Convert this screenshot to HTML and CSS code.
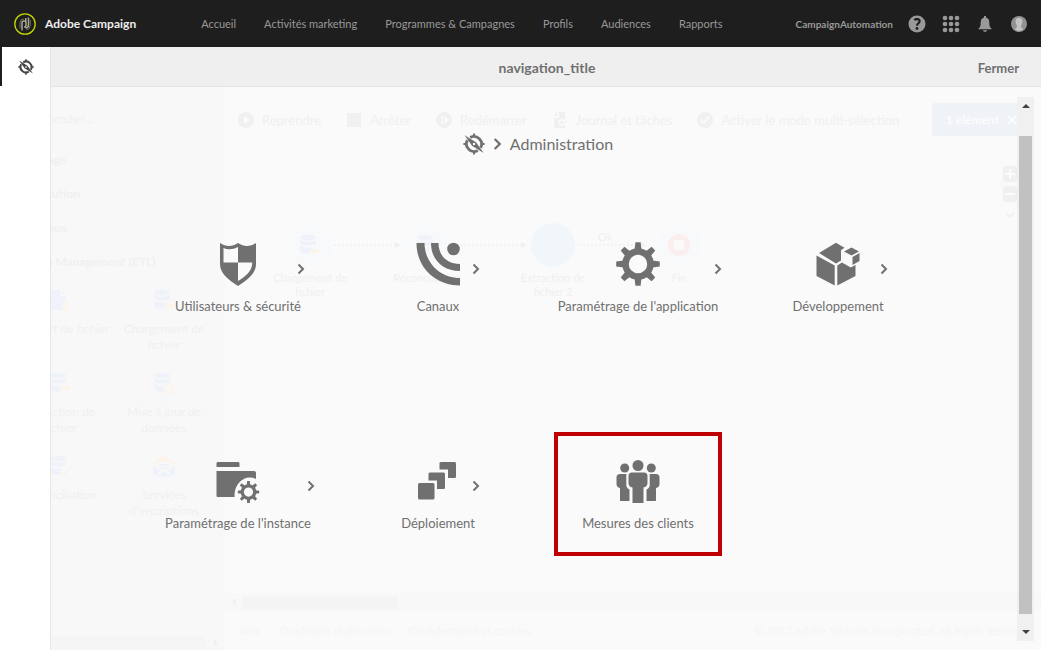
FILE: index.html
```html
<!DOCTYPE html>
<html lang="fr">
<head>
<meta charset="utf-8">
<meta name="viewport" content="width=device-width, initial-scale=1">
<title>Adobe Campaign</title>
<link rel="stylesheet" href="styles.css">
</head>
<body>
<svg class="defs" aria-hidden="true">
  <symbol id="compass" viewBox="0 0 22 22">
    <path fill="none" stroke="currentColor" stroke-width="2.8" d="M7.200 4.500A7.600 7.600 0 0 1 17.600 14.800M14.800 17.500A7.600 7.600 0 0 1 4.400 7.200"/>
    <path fill="currentColor" d="M10 .4h2v3h-2zM10 18.600h2v3h-2zM.4 10h3v2h-3zM18.600 10h3v2h-3z"/>
    <path fill="currentColor" fill-rule="evenodd" d="M1.600 2.200 13 9.200 20.600 20 9 12.800zM11 9.800a1.200 1.200 0 1 0 .01 2.400 1.200 1.200 0 0 0-.01-2.400z"/>
  </symbol>
  <symbol id="chevron" viewBox="0 0 8 12"><path fill="none" stroke="currentColor" stroke-width="2" d="M1.500 1.500 6 6l-4.500 4.500"/></symbol>
  <symbol id="db" viewBox="0 0 22 22"><ellipse cx="9" cy="3.500" rx="8" ry="3"/><path d="M1 5.500c3 3 13 3 16 0v4c-3 3-13 3-16 0zM1 11.500c3 3 13 3 16 0v1c-4 0-6 3-6 7-4 1-8 0-10-2z"/></symbol>
  <symbol id="gear" viewBox="0 0 44 44">
    <g fill="currentColor">
      <path id="tooth" d="M18.500 8 19.400 .2h5.200L25.500 8z"/>
      <use href="#tooth" transform="rotate(45 22 22)"/><use href="#tooth" transform="rotate(90 22 22)"/><use href="#tooth" transform="rotate(135 22 22)"/><use href="#tooth" transform="rotate(180 22 22)"/><use href="#tooth" transform="rotate(225 22 22)"/><use href="#tooth" transform="rotate(270 22 22)"/><use href="#tooth" transform="rotate(315 22 22)"/>
    </g>
    <circle cx="22" cy="22" r="12.500" fill="none" stroke="currentColor" stroke-width="6.500"/>
  </symbol>
</svg>

<header class="topbar">
  <a class="brand" href="#">
    <svg class="logo" viewBox="0 0 22 22" aria-hidden="true"><circle cx="11" cy="11" r="10.200" fill="none" stroke="#c5d800" stroke-width="1.300"/><path fill="none" stroke="#a9a994" stroke-width="1.500" d="M8 17.500V10a2 2 0 0 1 4 0v2.500a2 2 0 0 1-2 1.500M14.500 4.500V12a3 3 0 0 1-3 3M11.800 5v4"/><path fill="none" stroke="#6c6c5c" stroke-width="1" d="M6 15.500V10a4 4 0 0 1 4-4M16.300 7v5.500a5 5 0 0 1-4 4.500"/></svg>
    <span>Adobe Campaign</span>
  </a>
  <nav class="menu" aria-label="Principal">
    <a href="#">Accueil</a><a href="#">Activités marketing</a><a href="#">Programmes &amp; Campagnes</a><a href="#">Profils</a><a href="#">Audiences</a><a href="#">Rapports</a>
  </nav>
  <a class="account" href="#">CampaignAutomation</a>
  <div class="tools">
    <button aria-label="Aide"><svg viewBox="0 0 18 18"><circle cx="9" cy="9" r="8.500" fill="#999"/><path fill="none" stroke="#1e1e1e" stroke-width="2.200" d="M6.300 5C8 3.500 11.600 3.800 11.600 6.300c0 2-2.600 2-2.600 4.500"/><circle cx="9" cy="13.500" r="1.400" fill="#1e1e1e"/></svg></button>
    <button aria-label="Applications"><svg viewBox="0 0 18 18" fill="#999"><circle cx="3" cy="3" r="2.300"/><circle cx="9" cy="3" r="2.300"/><circle cx="15" cy="3" r="2.300"/><circle cx="3" cy="9" r="2.300"/><circle cx="9" cy="9" r="2.300"/><circle cx="15" cy="9" r="2.300"/><circle cx="3" cy="15" r="2.300"/><circle cx="9" cy="15" r="2.300"/><circle cx="15" cy="15" r="2.300"/></svg></button>
    <button aria-label="Notifications"><svg viewBox="0 0 18 18" fill="#999"><path d="M8 2.500V1h2v1.500c2.400.6 3.300 2.500 3.300 5 0 3.500.7 5 2.200 6v.8h-13v-.8c1.500-1 2.200-2.500 2.200-6 0-2.500.9-4.400 3.300-5zM7 15.300h4c-.3 2-3.700 2-4 0z"/></svg></button>
    <button aria-label="Profil"><svg viewBox="0 0 18 18"><circle cx="9" cy="9" r="8" fill="#939393"/><path fill="#c4c4c4" d="M9 3c-4.500 0-3.800 5.500-2 7.800.3 2.200-1.200 2.500-2.200 3.500 2.400 2.300 6 2.300 8.400 0-1-1-2.500-1.300-2.200-3.500C12.800 8.500 13.500 3 9 3z"/></svg></button>
  </div>
</header>

<div class="stage">
  <div class="workspace">
    <aside class="palette">
      <p class="search">Rechercher...</p>
      <h3>Ciblage</h3><h3>Exécution</h3><h3>Canaux</h3><h3>Data Management (ETL)</h3>
      <ul class="activities">
        <li class="single"><svg viewBox="0 0 22 22"><path d="M1 1h10v6h6v5c-3 0-5 4-3 9H1zM12.500 1l4.500 4.500h-4.500z"/><path class="warm" d="m17 12 3.500 5h-2v5h-3v-5h-2z"/></svg>Transfert de fichier</li>
        <li><svg viewBox="0 0 22 22"><use href="#db"/><path class="warm" d="m11 17 5-4v2.500h5v3h-5V21z"/></svg>Chargement de fichier</li>
        <li><svg viewBox="0 0 22 22"><use href="#db"/><path class="warm" d="M11 20c0-4 3-5 6-5v-2l5 3.500-5 3.500v-2c-3 0-5 0-6 2z"/></svg>Extraction de fichier</li>
        <li><svg viewBox="0 0 22 22"><use href="#db"/><circle class="ring" cx="15.500" cy="16.500" r="4.500"/></svg>Mise à jour de données</li>
        <li><svg viewBox="0 0 22 22"><use href="#db"/><path class="check" d="m12 17 3 3 6-7"/></svg>Réconciliation</li>
        <li><svg viewBox="0 0 22 22"><path class="warm" d="M0 9 11 0l11 9-4 2V7H4v4z"/><path d="M0 11l8 5-8 6zM22 11l-8 5 8 6zM2 22l9-6 9 6zM6 9h10v2H6zM6 12h10v2H6z"/></svg>Services d'inscriptions</li>
      </ul>
      <div class="palette-scroll"><i></i><svg viewBox="0 0 8 8"><path d="M2 0v8l4-4z"/></svg></div>
    </aside>
    <main class="workflow">
      <div class="toolbar">
        <span><svg viewBox="0 0 16 16"><path fill-rule="evenodd" d="M8 0a8 8 0 1 0 .01 0zM6 4l6 4-6 4z"/></svg>Reprendre</span>
        <span><svg viewBox="0 0 16 16"><path d="M1 1h14v14H1z"/></svg>Arrêter</span>
        <span><svg viewBox="0 0 16 16"><path fill-rule="evenodd" d="M8 0a8 8 0 1 0 .01 0zM5 4h1.500v8H5zM8 4l5 4-5 4z"/></svg>Redémarrer</span>
        <span><svg viewBox="0 0 16 16"><path fill-rule="evenodd" d="M7 0h6v16H2V6h5zM10 7a3.500 3.500 0 1 0 .01 7 3.500 3.500 0 0 0-.01-7zM5 0v4H2z"/><circle cx="10" cy="10.500" r="1.800"/></svg>Journal et tâches</span>
        <span><svg viewBox="0 0 16 16"><circle cx="8" cy="8" r="8"/><path fill="none" stroke="#fafafa" stroke-width="2" d="m4 8 3 3 5-6"/></svg>Activer le mode multi-sélection</span>
        <b class="selected">1 élément<svg viewBox="0 0 10 10"><path stroke="currentColor" stroke-width="2" d="m1 1 8 8M9 1 1 9"/></svg></b>
      </div>
      <div class="canvas">
        <svg class="links" viewBox="0 0 480 100" fill="none" stroke="#f0f0f0" stroke-width="1.500" stroke-dasharray="2 2"><path d="M109 50h62M235 50h62M354 50h62"/><path fill="#f0f0f0" stroke="none" d="m170 47 6 3-6 3zM296 47l6 3-6 3zM415 47l6 3-6 3z"/></svg>
        <div class="node n1"><span><svg viewBox="0 0 22 22"><use href="#db"/><path class="warm" d="m11 17 5-4v2.500h5v3h-5V21z"/></svg></span>Chargement de fichier</div>
        <div class="node n2"><span><svg viewBox="0 0 22 22"><use href="#db"/></svg></span>Réconciliation</div>
        <div class="node n3"><span></span>Extraction de fichier 2</div>
        <div class="node n4"><span><svg viewBox="0 0 22 22"><circle cx="11" cy="11" r="11" fill="#fbeeee"/><path fill="#fafafa" d="M6 6h10v10H6z"/></svg></span>Fin</div>
        <div class="link-label">Ok</div>
        <div class="zoom"><svg viewBox="0 0 14 56"><rect width="14" height="16" rx="2" fill="#f0f0f0"/><rect y="20" width="14" height="16" rx="2" fill="#f0f0f0"/><path stroke="#fcfcfc" stroke-width="2" d="M2 8h10M7 3v10M2 28h10"/><path fill="none" stroke="#eee" stroke-width="1.500" d="m3 47 4 4 4-4"/></svg></div>
      </div>
      <div class="canvas-scroll"><svg viewBox="0 0 8 8"><path d="M6 0v8L2 4z"/></svg><i></i></div>
      <footer class="footer"><span>Aide</span><span>Conditions d'utilisation</span><span>Confidentialité et cookies</span><span class="legal">© 2017 Adobe Systems Incorporated. All Rights Reserved.</span></footer>
    </main>
  </div>

  <aside class="rail"><button aria-label="Navigation"><svg viewBox="0 0 22 22"><use href="#compass"/></svg></button></aside>

  <section class="panel">
    <header class="panel-head"><h1>navigation_title</h1><button>Fermer</button></header>
    <div class="panel-body">
      <div class="content">
        <h2 class="crumbs"><svg class="crumb-icon" viewBox="0 0 22 22"><use href="#compass"/></svg><svg class="crumb-sep" viewBox="0 0 8 12"><use href="#chevron"/></svg>Administration</h2>
        <div class="tiles">
          <a class="tile" href="#"><svg class="icon" viewBox="0 0 44 44"><path fill="currentColor" fill-rule="evenodd" d="M4 1c6 4 12 4 18 0 6 4 12 4 18 0v21c0 10-9 16-18 22C13 38 4 32 4 22zM7.500 6v14.500H22V5C17 7.500 12 8 7.500 6zM22 20.500V39c8-5 14-9.500 14.300-18.500z"/></svg><svg class="go" viewBox="0 0 8 12"><use href="#chevron"/></svg><span>Utilisateurs &amp; sécurité</span></a>
          <a class="tile" href="#"><svg class="icon" viewBox="0 0 44 44"><circle cx="37.500" cy="7" r="6.300" fill="currentColor"/><path fill="currentColor" d="M.5 1h8c0 19 15 35 35.500 35v7.500C20 43.500.5 26 .5 1zM15 1h7.500c0 12 8 21 21.500 21v7C27 29 15 18 15 1z"/></svg><svg class="go" viewBox="0 0 8 12"><use href="#chevron"/></svg><span>Canaux</span></a>
          <a class="tile" href="#"><svg class="icon" viewBox="0 0 44 44"><use href="#gear"/></svg><svg class="go" viewBox="0 0 8 12"><use href="#chevron"/></svg><span>Paramétrage de l'application</span></a>
          <a class="tile" href="#"><svg class="icon" viewBox="0 0 44 44"><path fill="currentColor" d="M3 11 20 .8l8.500 5-3.500 2.500V18.500L20 21.500zM.5 13.500 18.700 23.500v20L.5 34zM21.300 23.500l4.700-3 8.700 5 4.800-2.500V34L21.300 43.500zM28 9.500l7.500-4 7.500 4-7.500 4zM36.500 15l7-4v8l-7 4z"/></svg><svg class="go" viewBox="0 0 8 12"><use href="#chevron"/></svg><span>Développement</span></a>
          <a class="tile" href="#"><svg class="icon" viewBox="0 0 44 44"><path fill="currentColor" d="M.5 4.500c0-1 .5-1.500 1.500-1.500h20c1 0 1.500.5 1.500 1.500V8H.5zM.5 12H38c1.300 0 2 .7 2 2v6c-11-5-22 4-21.500 18H2c-1 0-1.500-.5-1.500-1.500z"/><svg x="21.500" y="22" width="22" height="22" viewBox="0 0 44 44"><use href="#gear"/></svg></svg><svg class="go" viewBox="0 0 8 12"><use href="#chevron"/></svg><span>Paramétrage de l'instance</span></a>
          <a class="tile" href="#"><svg class="icon" viewBox="0 0 44 44"><g fill="currentColor"><rect x="2" y="24" width="16.500" height="16.500" rx="1.500"/><path d="M14 13.500h13c1.500 0 2 .5 2 2v13c0 1.300-.7 1.500-1.500 1.500H21v-8.500H12.500v-6c0-1.300.2-2 1.500-2zM25 3h13c1.500 0 2 .5 2 2v12.500c0 1.300-.7 1.500-1.500 1.500H32v-8.500h-8.500V5c0-1.300.2-2 1.500-2z"/></g></svg><svg class="go" viewBox="0 0 8 12"><use href="#chevron"/></svg><span>Déploiement</span></a>
          <a class="tile marked" href="#"><svg class="icon" viewBox="0 0 44 44"><g fill="currentColor"><circle cx="22" cy="6.500" r="5.500"/><circle cx="8.700" cy="9" r="4.500"/><circle cx="35.300" cy="9" r="4.500"/><path d="M16 13.500h12c2.300 0 3.500 1.200 3.500 3.500v7c0 2.500-1.500 4-4 4.500V44h-11V28.500c-2.500-.5-4-2-4-4.500v-7c0-2.300 1.200-3.500 3.500-3.500z"/><path id="side" d="M4 15h6.300v11.500c.4 2 1.200 3 3.200 4V42H5c-.8 0-1-.4-1-1V29C1.500 28.500.5 27 .5 25v-6.500C.5 16.200 1.700 15 4 15z"/><use href="#side" transform="matrix(-1 0 0 1 44 0)"/></g></svg><span>Mesures des clients</span></a>
        </div>
      </div>
      <div class="scrollbar" aria-hidden="true"><svg viewBox="0 0 8 4"><path d="M0 4 4 0l4 4z"/></svg><i></i><svg viewBox="0 0 8 4"><path d="m0 0 4 4 4-4z"/></svg></div>
    </div>
  </section>
</div>
</body>
</html>
```

FILE: styles.css
```css
* { box-sizing: border-box; }
body {
  margin: 0;
  min-height: 100vh;
  display: flex;
  flex-direction: column;
  background: #fafafa;
  color: #707070;
  font-family: Lato, "Noto Sans", sans-serif;
  font-size: 13px;
}
h1, h2, h3, p, ul { margin: 0; padding: 0; font-weight: normal; list-style: none; }
a { color: inherit; text-decoration: none; }
button { padding: 0; border: 0; background: none; color: inherit; font: inherit; cursor: pointer; }
svg { display: block; flex: none; }
.defs { position: absolute; width: 0; height: 0; }

.topbar { display: flex; align-items: center; height: 47px; padding: 0 13px 0 14px; background: #1e1e1e; color: #999; }
.brand { display: flex; align-items: center; gap: 9px; color: #eee; font-weight: bold; font-size: 12px; white-space: nowrap; }
.logo { width: 22px; height: 22px; }
.menu { display: flex; gap: 28px; margin-left: 65px; font-size: 11px; white-space: nowrap; }
.account { margin-left: auto; font-size: 10px; font-weight: bold; }
.tools { display: flex; gap: 16px; margin-left: 15px; }
.tools svg { width: 18px; height: 18px; }

.stage { flex: 1; display: grid; grid-template-columns: 51px 1fr; }
.rail { grid-area: 1 / 1; background: #fff; border-right: 1px solid #e6e6e6; }
.rail button { display: grid; place-items: center; width: 100%; height: 39px; border-left: 2px solid #1e1e1e; color: #444; }
.rail svg { width: 16px; height: 16px; }

.panel { grid-area: 1 / 2; display: flex; flex-direction: column; z-index: 1; }
.panel-head { display: grid; grid-template-columns: 1fr auto 1fr; align-items: center; height: 40px; padding: 2px 22px 0 24px; background: #efefef; border-bottom: 1px solid #e4e4e4; font-size: 13px; font-weight: bold; }
.panel-head h1 { grid-column: 2; font-size: 14px; font-weight: bold; }
.panel-head button { justify-self: end; }
.panel-body { flex: 1; display: flex; }
.content { flex: 1; padding: 42px 0 0 8px; }
.crumbs { display: flex; align-items: center; justify-content: center; gap: 8px; height: 30px; font-size: 16px; line-height: 18px; }
.crumb-icon { width: 22px; height: 22px; }
.crumb-sep { width: 9px; height: 14px; }

.tiles { display: grid; grid-template-columns: repeat(auto-fit, 200px); justify-content: center; justify-items: center; row-gap: 93px; margin-top: 56px; }
.tile { display: grid; grid-template-columns: 1fr; row-gap: 10px; justify-items: center; min-width: 76px; padding: 27px 0 23px; line-height: 20px; white-space: nowrap; }
.tile .icon { grid-area: 1 / 1; width: 44px; height: 44px; }
.tile .go { grid-area: 1 / 1; justify-self: end; align-self: center; width: 8px; height: 12px; margin: 10px -4px 0 0; }
.tile span { grid-row: 2; }
.marked { padding: 23px 24px 19px; border: 4px solid #c00000; }

.scrollbar { display: flex; flex-direction: column; align-items: center; width: 17px; margin: 10px 7px 9px 0; padding: 7px 0; background: #f0f0f0; }
.scrollbar svg { width: 8px; height: 4px; fill: #404040; }
.scrollbar i { flex: 1; width: 13px; margin: 28px 0 16px; background: #c1c1c1; }

.workspace { grid-area: 1 / 1 / 2 / 3; display: grid; grid-template-columns: 225px 1fr; padding-top: 40px; color: #f0f0f0; overflow: hidden; }
.workspace svg { fill: currentColor; }
.workspace .warm { fill: #fcf3ea; }
.workspace .ring, .workspace .check { fill: none; stroke: #fcf3ea; stroke-width: 2; }
.palette { display: flex; flex-direction: column; background: #f8f8f8; font-size: 12px; }
.search { padding: 16px 30px 8px; line-height: 32px; font-style: italic; }
.palette h3 { padding-left: 27px; font-size: 12px; font-weight: bold; line-height: 34px; }
.activities { display: grid; grid-template-columns: 104px 104px; grid-auto-rows: 83px; padding: 10px 8px 0; line-height: 16px; text-align: center; }
.activities li { padding: 0 8px; }
.activities .single { padding: 0; white-space: nowrap; }
.activities svg { width: 22px; height: 22px; margin: 0 auto 10px; color: #eff3f9; }
.palette-scroll { display: flex; align-items: center; gap: 6px; height: 14px; margin-top: auto; }
.palette-scroll i { width: 206px; height: 14px; background: #f5f5f5; }
.palette-scroll svg { width: 8px; height: 8px; }
.workflow { display: flex; flex-direction: column; min-width: 0; }
.toolbar { display: flex; align-items: center; gap: 25px; padding: 16px 14px 16px 13px; font-size: 13px; white-space: nowrap; }
.toolbar span { display: flex; align-items: center; gap: 8px; }
.toolbar span svg { width: 16px; height: 16px; }
.selected { display: flex; align-items: center; gap: 8px; height: 33px; margin-left: auto; padding: 0 10px 0 14px; border-radius: 3px; background: #eff3f8; color: #fcfcfc; font-size: 12px; }
.selected svg { width: 10px; height: 10px; }
.canvas { flex: 1; position: relative; font-size: 11px; line-height: 14px; }
.links { position: absolute; left: 0; top: 43px; width: 480px; height: 100px; }
.node { position: absolute; top: 71px; width: 84px; text-align: center; }
.node span { display: grid; place-items: center; width: 44px; height: 44px; margin: 0 auto 4px; border-radius: 50%; background: #f8f9fb; }
.node svg { width: 22px; height: 22px; color: #eff3f9; }
.n1 { left: 43px; }
.n2 { left: 160px; }
.n3 { left: 286px; }
.n3 span { background: #f1f6fa; }
.n4 { left: 412px; }
.link-label { position: absolute; left: 373px; top: 78px; }
.zoom { position: absolute; right: 24px; top: 14px; }
.zoom svg { width: 14px; height: 56px; }
.canvas-scroll { display: flex; align-items: center; gap: 4px; height: 18px; padding: 0 5px; background: #f8f8f8; }
.canvas-scroll svg { width: 8px; height: 8px; }
.canvas-scroll i { width: 156px; height: 13px; background: #f4f4f4; }
.footer { display: flex; align-items: center; gap: 18px; height: 39px; padding: 0 7px 0 14px; color: #f5f5f5; font-size: 11px; white-space: nowrap; }
.legal { margin-left: auto; }
```
